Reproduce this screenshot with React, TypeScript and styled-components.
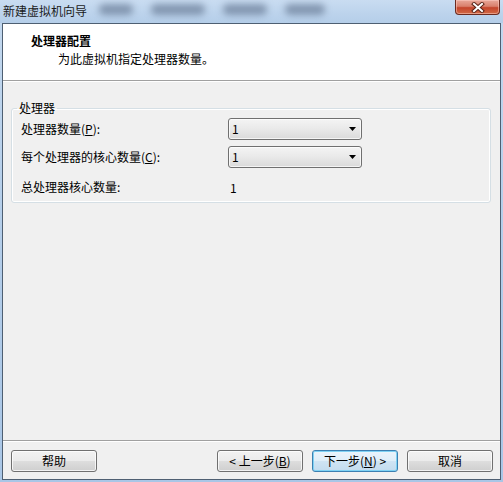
import React from "react";
import styled, { createGlobalStyle } from "styled-components";

const Global = createGlobalStyle`
  html, body { margin: 0; padding: 0; }
  body {
    width: 503px;
    height: 482px;
    overflow: hidden;
    font-family: "Noto Sans CJK SC", "Liberation Sans", sans-serif;
    font-size: 12px;
    color: #000;
  }
  #root { width: 503px; height: 482px; }
`;

const Window = styled.div`
  width: 503px;
  height: 482px;
  display: flex;
  flex-direction: column;
  background: linear-gradient(to bottom, #c4d9ef 0%, #b6cfea 40%, #a9c6e6 100%);
  box-sizing: border-box;
`;

const TitleBar = styled.div`
  height: 23px;
  flex: none;
  display: flex;
  align-items: flex-start;
  padding-left: 3px;
  box-sizing: border-box;
  background: linear-gradient(to bottom, #c9dcf1 0%, #bcd3ec 60%, #b5cee9 100%);
  overflow: hidden;
`;

const TitleText = styled.span`
  font-size: 12px;
  line-height: 22px;
  color: #1b1b1b;
`;

const Ghosts = styled.div`
  display: flex;
  gap: 18px;
  margin-left: 12px;
  margin-top: 4px;
`;

const Ghost = styled.span<{ $w: number }>`
  display: block;
  width: ${(p) => p.$w}px;
  height: 11px;
  border-radius: 5px;
  background: rgba(70, 88, 115, 0.5);
  filter: blur(3.5px);
`;

const CloseButton = styled.div`
  margin-left: auto;
  margin-right: 3px;
  width: 45px;
  height: 15px;
  box-sizing: border-box;
  border: 1px solid #6b2a1f;
  border-top: none;
  border-radius: 0 0 4px 4px;
  background: linear-gradient(to bottom, #e9a89a 0%, #d9806c 45%, #c4452c 55%, #d26a45 100%);
  display: flex;
  align-items: center;
  justify-content: center;
  box-shadow: inset 0 0 0 1px rgba(255, 210, 200, 0.5);
`;

const Client = styled.div`
  flex: 1;
  margin: 0 2px 2px 2px;
  border: 1px solid #4e5f72;
  background: #f0f0f0;
  display: flex;
  flex-direction: column;
  min-height: 0;
`;

const Header = styled.div`
  height: 56px;
  flex: none;
  background: #ffffff;
  border-bottom: 1px solid #a0a0a0;
  display: flex;
  flex-direction: column;
`;

const HeaderTitle = styled.div`
  font-weight: bold;
  font-size: 12px;
  line-height: 16px;
  margin: 9px 0 0 28px;
  color: #000;
`;

const HeaderSub = styled.div`
  font-size: 12px;
  line-height: 16px;
  margin: 2px 0 0 55px;
  color: #000;
`;

const Body = styled.div`
  flex: 1;
  padding: 20px 9px 0 8px;
  box-shadow: inset 0 1px 0 #ffffff;
`;

const Group = styled.fieldset`
  margin: 0;
  padding: 3px 9px 2px 9px;
  border: 1px solid #d5dfe5;
  border-radius: 3px;
  box-shadow: inset 0 0 0 1px #ffffff;
  min-width: 0;
`;

const Legend = styled.legend`
  padding: 0 2px;
  margin-left: -4px;
  font-size: 12px;
  line-height: 14px;
  color: #000;
`;

const Grid = styled.div`
  display: grid;
  grid-template-columns: 207px 134px;
  grid-template-rows: 22px 22px 26px;
  row-gap: 6px;
  align-items: center;
`;

const Label = styled.span`
  font-size: 12px;
  line-height: 14px;
  color: #000;
`;

const Key = styled.span`
  text-decoration: underline;
`;

const Combo = styled.div`
  height: 22px;
  box-sizing: border-box;
  border: 1px solid #707070;
  border-radius: 3px;
  background: linear-gradient(to bottom, #f4f4f4 0%, #e9e9e9 50%, #dadada 100%);
  box-shadow: inset 0 0 0 1px rgba(255, 255, 255, 0.7);
  display: flex;
  align-items: center;
  padding: 0 5px 0 3px;
`;

const ComboValue = styled.span`
  flex: 1;
  font-size: 12px;
  line-height: 14px;
  color: #000;
`;

const Value = styled.span`
  font-size: 12px;
  color: #000;
  padding-left: 2px;
`;

const Footer = styled.div`
  flex: none;
  height: 39px;
  box-sizing: border-box;
  border-top: 1px solid #a0a0a0;
  box-shadow: inset 0 1px 0 #ffffff;
  display: flex;
  align-items: flex-start;
  padding: 9px 7px 0 8px;
`;

const Spacer = styled.div`
  flex: 1;
`;

const Button = styled.div<{ $default?: boolean }>`
  width: 86px;
  height: 22px;
  box-sizing: border-box;
  margin-left: ${(p) => (p.$default ? "9px" : "0")};
  margin-right: ${(p) => (p.$default ? "9px" : "0")};
  border: 1px solid ${(p) => (p.$default ? "#3c7fb1" : "#707070")};
  border-radius: 3px;
  background: ${(p) =>
    p.$default
      ? "linear-gradient(to bottom, #eaf4fb 0%, #dfeef9 48%, #cfe4f4 52%, #c3dcef 100%)"
      : "linear-gradient(to bottom, #f2f2f2 0%, #ebebeb 48%, #dddddd 52%, #cfcfcf 100%)"};
  box-shadow: ${(p) =>
    p.$default ? "inset 0 0 0 1px #7fd2f4" : "inset 0 0 0 1px rgba(255,255,255,0.75)"};
  display: flex;
  align-items: center;
  justify-content: center;
  font-size: 12px;
  line-height: 14px;
  color: #000;
`;

const Arrow = () => (
  <svg width="7" height="4" viewBox="0 0 7 4">
    <path d="M0 0 H7 L3.5 4 Z" fill="#000" />
  </svg>
);

const CloseGlyph = () => (
  <svg width="14" height="11" viewBox="0 0 14 11">
    <path d="M3 2 L11 9 M11 2 L3 9" stroke="#5a2418" strokeWidth="4" strokeLinecap="square" />
    <path d="M3 2 L11 9 M11 2 L3 9" stroke="#ffffff" strokeWidth="2" strokeLinecap="square" />
  </svg>
);

export default function App() {
  return (
    <>
      <Global />
      <Window>
        <TitleBar>
          <TitleText>新建虚拟机向导</TitleText>
          <Ghosts>
            <Ghost $w={34} />
            <Ghost $w={54} />
            <Ghost $w={44} />
            <Ghost $w={40} />
          </Ghosts>
          <CloseButton>
            <CloseGlyph />
          </CloseButton>
        </TitleBar>
        <Client>
          <Header>
            <HeaderTitle>处理器配置</HeaderTitle>
            <HeaderSub>为此虚拟机指定处理器数量。</HeaderSub>
          </Header>
          <Body>
            <Group>
              <Legend>处理器</Legend>
              <Grid>
                <Label>
                  处理器数量(<Key>P</Key>):
                </Label>
                <Combo>
                  <ComboValue>1</ComboValue>
                  <Arrow />
                </Combo>
                <Label>
                  每个处理器的核心数量(<Key>C</Key>):
                </Label>
                <Combo>
                  <ComboValue>1</ComboValue>
                  <Arrow />
                </Combo>
                <Label>总处理器核心数量:</Label>
                <Value>1</Value>
              </Grid>
            </Group>
          </Body>
          <Footer>
            <Button>帮助</Button>
            <Spacer />
            <Button>
              &lt; 上一步(<Key>B</Key>)
            </Button>
            <Button $default>
              下一步(<Key>N</Key>) &gt;
            </Button>
            <Button>取消</Button>
          </Footer>
        </Client>
      </Window>
    </>
  );
}
